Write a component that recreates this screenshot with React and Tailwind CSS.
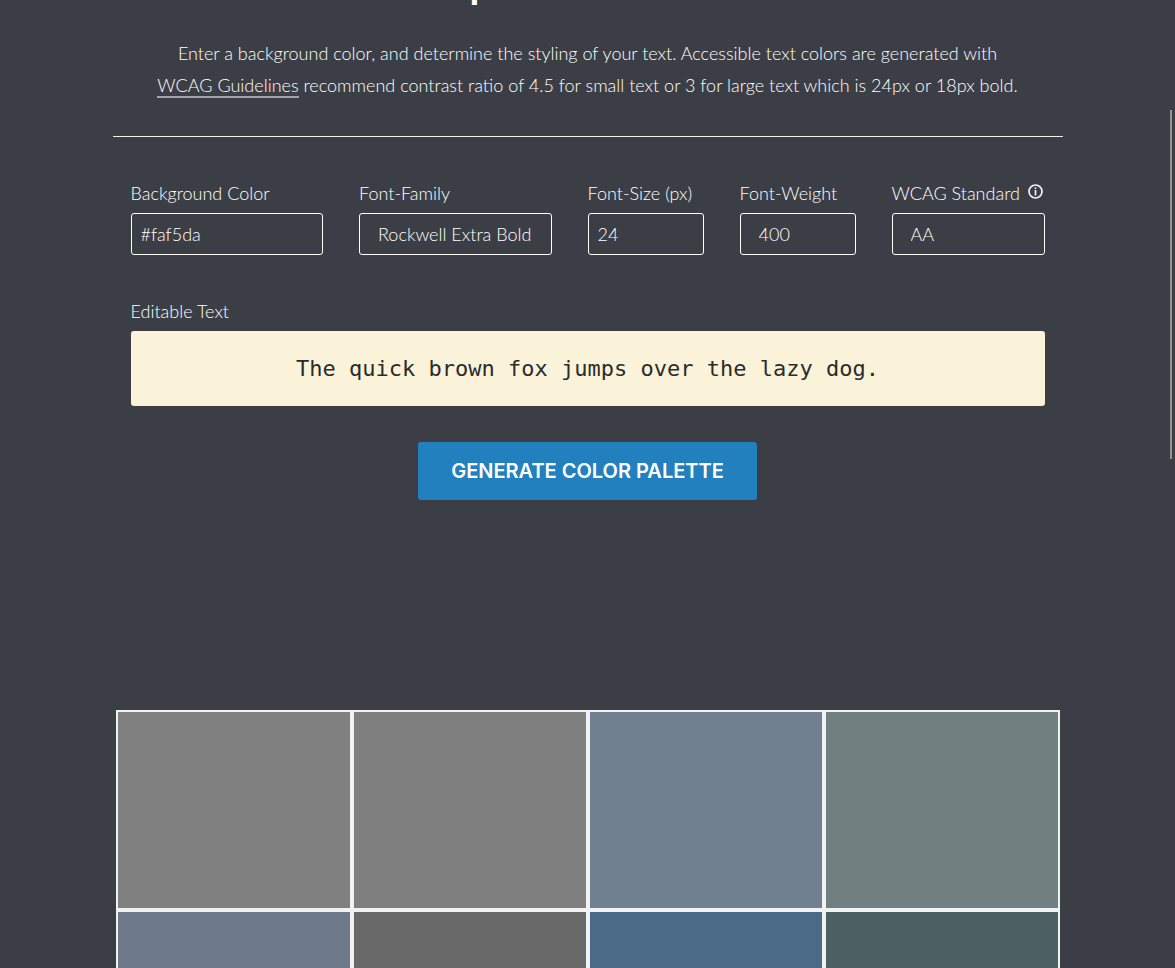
const controlClass =
  'h-[42px] w-full min-w-0 appearance-none rounded-[3px] border border-white bg-transparent text-[18px] font-light text-white outline-none';

const swatches = [
  { name: 'Gray', color: 'bg-[#808080]' },
  { name: 'Medium gray', color: 'bg-[#7f7f7f]' },
  { name: 'Slate', color: 'bg-[#708090]' },
  { name: 'Sage', color: 'bg-[#708080]' },
  { name: 'Steel', color: 'bg-[#6e7a8a]' },
  { name: 'Dim gray', color: 'bg-[#696969]' },
  { name: 'Blue', color: 'bg-[#4b6a87]' },
  { name: 'Deep teal', color: 'bg-[#4c5f63]' },
];

function Field({ id, label, icon, children }) {
  return (
    <div className="min-w-0">
      <div className="flex h-[30px] items-start gap-2 whitespace-nowrap leading-[20px]">
        <label htmlFor={id}>{label}</label>
        {icon}
      </div>
      {children}
    </div>
  );
}

function InfoIcon() {
  return (
    <svg viewBox="0 0 15 15" className="mt-px h-[15px] w-[15px] shrink-0" fill="none" stroke="#f2f2f2" aria-hidden="true">
      <circle cx="7.5" cy="7.5" r="6.5" strokeWidth="1.7" />
      <path d="M7.5 3.4v1.5M7.5 6v5.4" strokeWidth="1.7" />
    </svg>
  );
}

function Intro() {
  return (
    <header className="border-b border-[#f2f2f2]">
      <h1 className="-mt-[37px] h-[74px] pl-[357px] text-[40px] font-bold leading-[40px] text-white">p</h1>
      <p className="pb-[35px] text-center leading-[32px]">
        Enter a background color, and determine the styling of your text. Accessible text colors are generated with
        <br />
        <a href="#guidelines" className="border-b-2 border-[#a0a6a8]">WCAG Guidelines</a> recommend contrast ratio of 4.5 for
        small text or 3 for large text which is 24px or 18px bold.
      </p>
    </header>
  );
}

export default function App() {
  return (
    <div className="relative h-screen overflow-hidden bg-[#3c3e46] font-['Lato',sans-serif] text-[18px] font-light text-white">
      <main className="mx-auto flow-root max-w-[950px]">
        <Intro />
        <form className="px-[18px] pt-[46px]" onSubmit={(e) => e.preventDefault()}>
          <div className="grid grid-cols-[385fr_385fr_232fr_232fr_306fr] gap-9">
            <Field id="background" label="Background Color">
              <input id="background" type="text" defaultValue="#faf5da" className={`${controlClass} px-[9px]`} />
            </Field>
            <Field id="family" label="Font-Family">
              <select id="family" className={`${controlClass} pl-[18px]`}>
                <option>Rockwell Extra Bold</option>
              </select>
            </Field>
            <Field id="size" label="Font-Size (px)">
              <input id="size" type="text" inputMode="numeric" defaultValue="24" className={`${controlClass} px-[9px]`} />
            </Field>
            <Field id="weight" label="Font-Weight">
              <select id="weight" className={`${controlClass} pl-[18px]`}>
                <option>400</option>
              </select>
            </Field>
            <Field id="standard" label="WCAG Standard" icon={<InfoIcon />}>
              <select id="standard" className={`${controlClass} pl-[18px]`}>
                <option>AA</option>
              </select>
            </Field>
          </div>
          <div className="pt-[46px]">
            <Field id="sample" label="Editable Text">
              <input
                id="sample"
                type="text"
                defaultValue="The quick brown fox jumps over the lazy dog."
                className="h-[75px] w-full rounded-[3px] bg-[#faf3da] text-center font-['DejaVu_Sans_Mono',monospace] text-[22px] font-normal text-[#2b2b2b] outline-none"
              />
            </Field>
          </div>
          <div className="flex justify-center pt-9">
            <button
              type="submit"
              className="h-[58px] min-w-[339px] rounded-[3px] bg-[#2380bf] px-8 font-['Inter',sans-serif] text-[20px] font-semibold text-white"
            >
              GENERATE COLOR PALETTE
            </button>
          </div>
        </form>
        <section className="mt-[210px] grid grid-cols-4 px-[3px]" aria-label="Color palette">
          {swatches.map((swatch) => (
            <div key={swatch.name} className={`h-[200px] border-2 border-[#f2f2f2] ${swatch.color}`} />
          ))}
        </section>
      </main>
      <div className="absolute right-[3px] top-[110px] h-[349px] w-[2px] bg-[#969696]" />
    </div>
  );
}
